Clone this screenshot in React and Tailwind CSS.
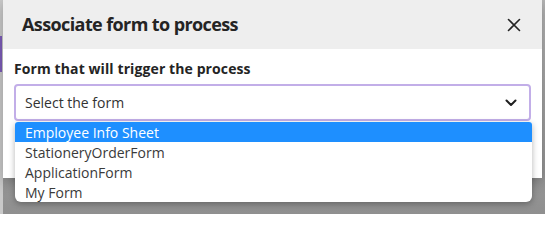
import { useState } from 'react';

const forms = ['Employee Info Sheet', 'StationeryOrderForm', 'ApplicationForm', 'My Form'];

function CloseIcon() {
  return (
    <svg width="14" height="14" viewBox="0 0 14 14" fill="none">
      <path d="M1.5 1.5l11 11M12.5 1.5l-11 11" stroke="#242424" strokeWidth="1.6" strokeLinecap="round" />
    </svg>
  );
}

function Chevron() {
  return (
    <svg width="12" height="8" viewBox="0 0 12 8" fill="none">
      <path d="M1.5 1.5L6 6l4.5-4.5" stroke="#1f1f1f" strokeWidth="2" strokeLinecap="round" strokeLinejoin="round" />
    </svg>
  );
}

export default function App() {
  const [active] = useState(0);

  return (
    <div
      className="relative flex h-[214px] w-[545px] overflow-hidden bg-[linear-gradient(180deg,#b4b4b4_0%,#8f8f8f_100%)]"
      style={{ fontFamily: '"Open Sans", "Noto Sans", sans-serif' }}
    >
      {/* page behind the backdrop */}
      <div className="flex w-[3px] shrink-0 flex-col bg-[#c9c9c9] pt-[36px]">
        <div className="h-[36px] w-[2px] bg-[#7c5cb8]" />
      </div>

      <div className="relative flex h-[178px] w-[539px] flex-col bg-white shadow-[0_4px_12px_rgba(0,0,0,0.25)]">
        <div className="flex h-[49px] items-center justify-between bg-[#eeeeee] pl-[19px] pr-[16px]">
          <h2 className="text-[18px] font-bold tracking-[-0.6px] text-[#242424]">Associate form to process</h2>
          <button className="flex h-6 w-6 items-center justify-center">
            <CloseIcon />
          </button>
        </div>

        <div className="flex flex-col px-[11px] pt-[9px]">
          <label className="text-[14px] font-bold tracking-[0.1px] text-[#242424]">Form that will trigger the process</label>
          <div className="mt-[5px] flex h-[37px] items-center justify-between rounded-[4px] border-2 border-[#c2aee8] pl-[9px] pr-[12px]">
            <span className="text-[14px] text-[#323232]">Select the form</span>
            <Chevron />
          </div>
        </div>

        <ul className="absolute left-[12px] top-[122px] w-[517px] overflow-hidden rounded-b-[6px] rounded-t-[3px] bg-white shadow-[0_2px_6px_rgba(0,0,0,0.3)]">
          {forms.map((f, i) => (
            <li
              key={f}
              className={
                i === active
                  ? 'flex h-[20px] items-center bg-[#1e8fff] pl-[10px] text-[14px] text-white'
                  : 'flex h-[20px] items-center pl-[10px] text-[14px] text-[#3a3a3a]'
              }
            >
              {f}
            </li>
          ))}
        </ul>
      </div>
    </div>
  );
}
